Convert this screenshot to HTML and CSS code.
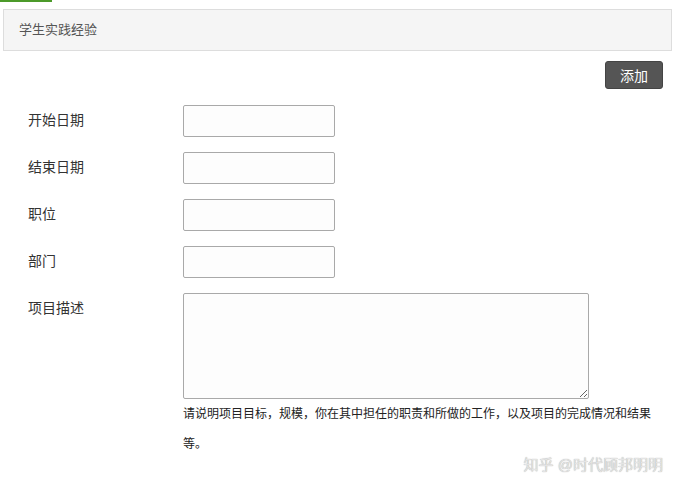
FILE: index.html
```html
<!DOCTYPE html>
<html lang="zh-CN">
<head>
    <meta charset="UTF-8">
    <title>学生实践经验</title>
    <link rel="stylesheet" href="styles.css">
</head>
<body>
    <div class="top-link"></div>
    <div class="panel-head">学生实践经验</div>

    <div class="toolbar">
        <button class="btn-add">添加</button>
    </div>

    <div class="form">
        <div class="row">
            <label>开始日期</label>
            <input type="text">
        </div>
        <div class="row">
            <label>结束日期</label>
            <input type="text">
        </div>
        <div class="row">
            <label>职位</label>
            <input type="text">
        </div>
        <div class="row">
            <label>部门</label>
            <input type="text">
        </div>
        <div class="row">
            <label>项目描述</label>
            <div class="field">
                <textarea></textarea>
                <p class="help">请说明项目目标，规模，你在其中担任的职责和所做的工作，以及项目的完成情况和结果等。</p>
            </div>
        </div>
    </div>

    <div class="watermark">知乎 @时代顾邦明明</div>
</body>
</html>
```

FILE: styles.css
```css
body {
    margin: 0;
    font-family: "Liberation Sans", "Noto Sans CJK SC", sans-serif;
    background-color: #fff;
    color: #333;
    position: relative;
    height: 489px;
    overflow: hidden;
}
.top-link {
    width: 52px;
    height: 2px;
    background-color: #4c9a2a;
}
.panel-head {
    margin: 7px 8px 0 3px;
    height: 40px;
    line-height: 40px;
    padding-left: 15px;
    background-color: #f5f5f5;
    border: 1px solid #ddd;
    font-size: 13px;
    color: #555;
}
.toolbar {
    display: flex;
    justify-content: flex-end;
    padding: 10px 17px 0 0;
}
.btn-add {
    width: 58px;
    height: 28px;
    border: 1px solid #444;
    border-radius: 3px;
    background-color: #555;
    color: #fff;
    font-size: 14px;
    font-family: "Liberation Sans", "Noto Sans CJK SC", sans-serif;
    padding: 0;
}
.form {
    padding: 16px 0 0 28px;
}
.row {
    display: flex;
    align-items: flex-start;
    margin-bottom: 15px;
}
.row label {
    width: 155px;
    font-size: 14px;
    line-height: 31px;
    color: #333;
}
.row input {
    width: 152px;
    height: 32px;
    box-sizing: border-box;
    border: 1px solid #a9a9a9;
    border-radius: 2px;
    background-color: #fdfdfd;
    margin: 0;
}
.field textarea {
    display: block;
    width: 406px;
    height: 106px;
    box-sizing: border-box;
    border: 1px solid #a9a9a9;
    border-radius: 2px;
    background-color: #fdfdfd;
    margin: 0;
    resize: vertical;
}
.help {
    margin: 0;
    width: 475px;
    font-size: 12px;
    line-height: 30px;
    color: #222;
}
.watermark {
    position: absolute;
    right: 17px;
    bottom: 15px;
    font-size: 15px;
    color: #e4e4e4;
    text-shadow: 0 0 1px #999;
}
```
